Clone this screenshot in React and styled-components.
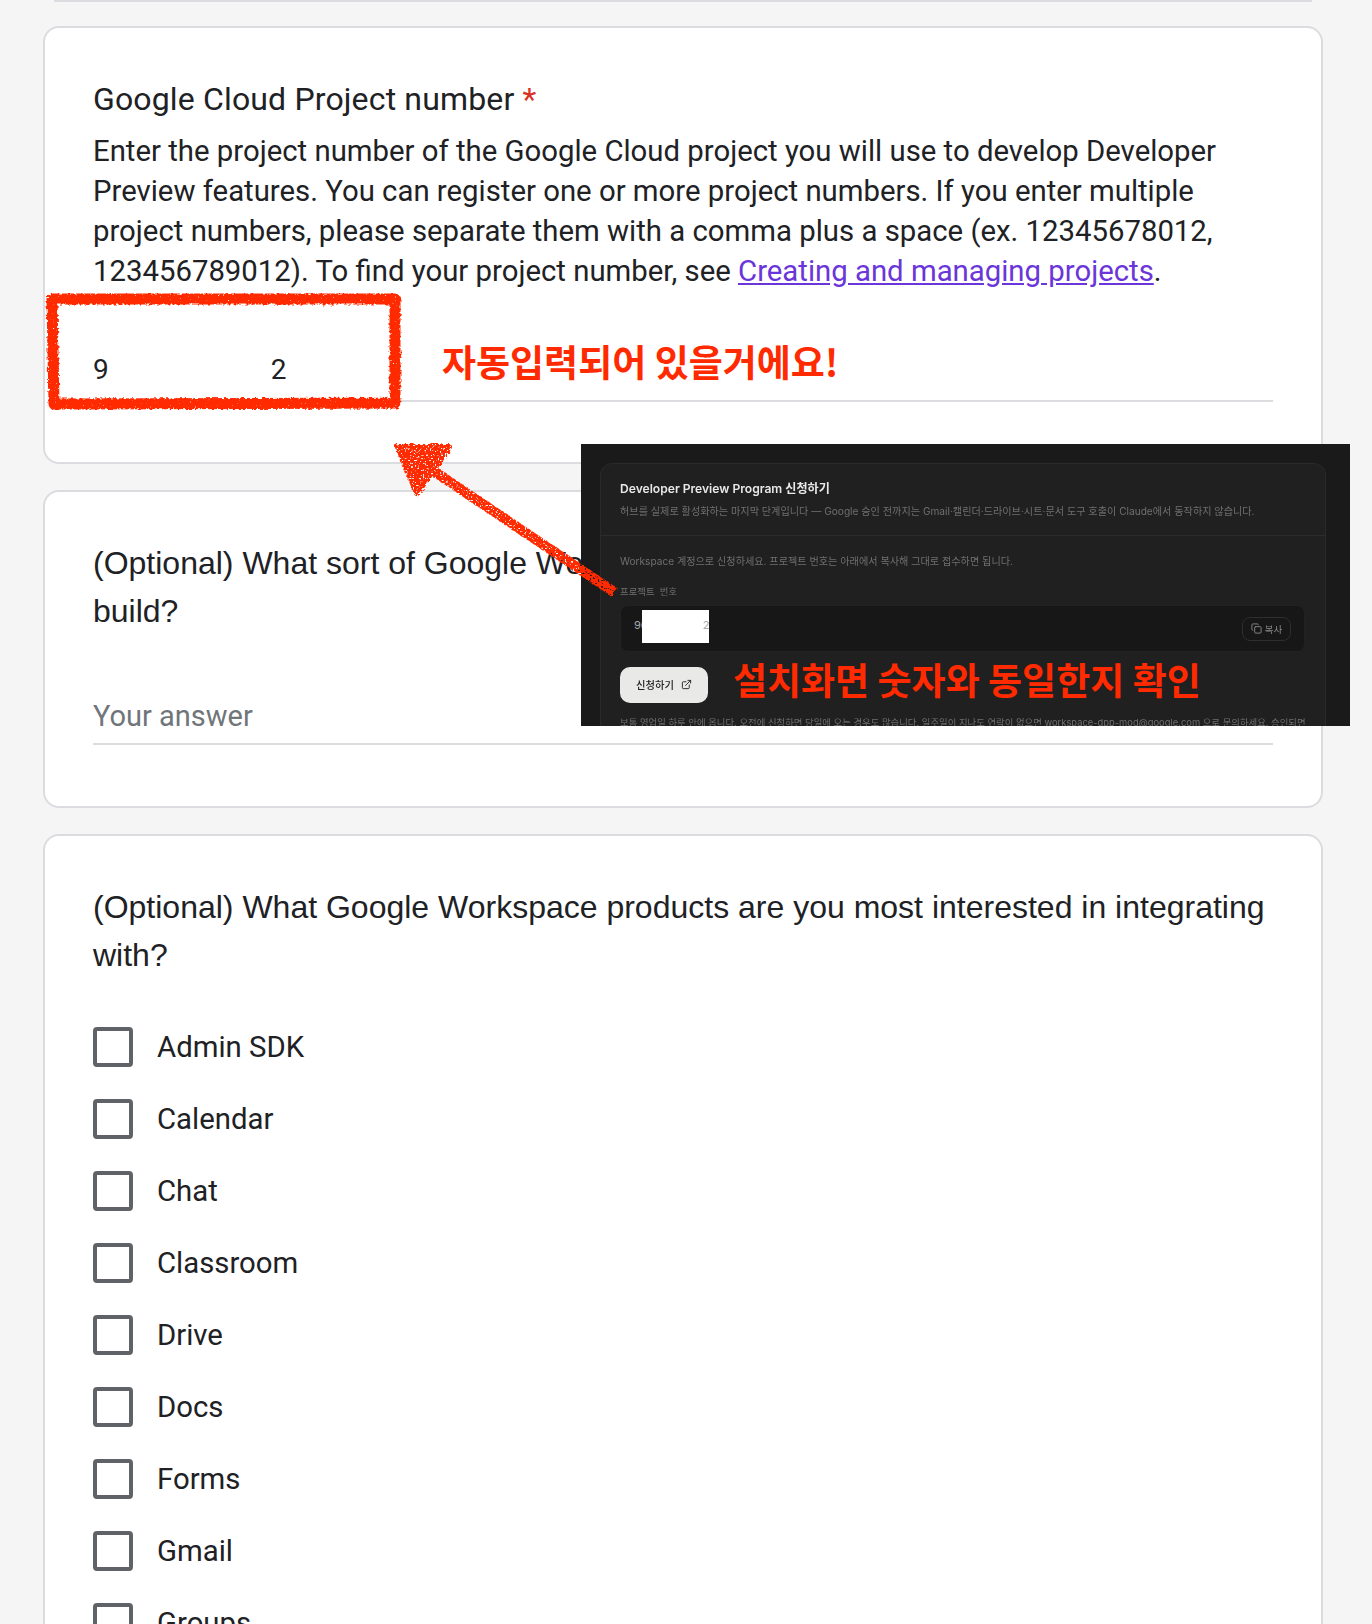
import React from 'react';
import styled, { createGlobalStyle, css } from 'styled-components';

const products = ['Admin SDK', 'Calendar', 'Chat', 'Classroom', 'Drive', 'Docs', 'Forms', 'Gmail', 'Groups'];

export default function App() {
	return (
		<>
			<GlobalStyle />
			<Page>
				<PrevUnderline />
				<Card>
					<Title $roboto>
						Google Cloud Project number <Required>*</Required>
					</Title>
					<Description>
						Enter the project number of the Google Cloud project you will use to develop Developer Preview features.
						You can register one or more project numbers. If you enter multiple project numbers, please separate them
						with a comma plus a space (ex. 12345678012, 123456789012). To find your project number, see{' '}
						<DocLink href="#">Creating and managing projects</DocLink>.
					</Description>
					<InputLine $filled>
						<span>9</span>
						<span>2</span>
					</InputLine>
				</Card>
				<Card>
					<Title>
						(Optional) What sort of Google Workspace integration are you planning to
						<br />
						build?
					</Title>
					<InputLine>Your answer</InputLine>
				</Card>
				<Card>
					<Title>(Optional) What Google Workspace products are you most interested in integrating with?</Title>
					<CheckList>
						{products.map(name => (
							<CheckRow key={name}>
								<CheckBox />
								{name}
							</CheckRow>
						))}
					</CheckList>
				</Card>

				<Panel>
					<PanelCard>
						<PanelHead>
							<PanelTitle>Developer Preview Program 신청하기</PanelTitle>
							<PanelSub>
								허브를 실제로 활성화하는 마지막 단계입니다 — Google 승인 전까지는 Gmail·캘린더·드라이브·시트·문서 도구 호출이 Claude에서 동작하지 않습니다.
							</PanelSub>
						</PanelHead>
						<PanelBody>
							<PanelSub>Workspace 계정으로 신청하세요. 프로젝트 번호는 아래에서 복사해 그대로 접수하면 됩니다.</PanelSub>
							<FieldLabel>프로젝트 &nbsp;번호</FieldLabel>
							<NumberField>
								<NumberText>
									96<Redaction />2
								</NumberText>
								<CopyButton>
									<svg width="11" height="11" viewBox="0 0 24 24" fill="none" stroke="currentColor" strokeWidth="2" strokeLinejoin="round" strokeLinecap="round">
										<rect x="8" y="8" width="14" height="14" rx="2" />
										<path d="M4 16c-1.1 0-2-.9-2-2V4c0-1.1.9-2 2-2h10c1.1 0 2 .9 2 2" />
									</svg>
									복사
								</CopyButton>
							</NumberField>
							<ApplyButton>
								<span>신청하기</span>
								<svg width="11" height="11" viewBox="0 0 24 24" fill="none" stroke="currentColor" strokeWidth="2" strokeLinejoin="round" strokeLinecap="round">
									<path d="M15 3h6v6" />
									<path d="M10 14 21 3" />
									<path d="M18 13v6a2 2 0 0 1-2 2H5a2 2 0 0 1-2-2V8a2 2 0 0 1 2-2h6" />
								</svg>
							</ApplyButton>
							<PanelFoot>
								보통 영업일 하루 안에 옵니다. 오전에 신청하면 당일에 오는 경우도 많습니다. 일주일이 지나도 연락이 없으면 workspace-dpp-mod@google.com 으로 문의하세요. 승인되면
							</PanelFoot>
						</PanelBody>
					</PanelCard>
				</Panel>

				<Scribble viewBox="0 0 1372 1624" width="1372" height="1624">
					<defs>
						<filter id="rough" x="-5%" y="-5%" width="110%" height="110%">
							<feTurbulence type="fractalNoise" baseFrequency="0.35" numOctaves="2" seed="4" result="warp" />
							<feDisplacementMap in="SourceGraphic" in2="warp" scale="5" result="shaken" />
							<feTurbulence type="fractalNoise" baseFrequency="0.6" numOctaves="1" seed="9" />
							<feColorMatrix values="0 0 0 0 0  0 0 0 0 0  0 0 0 0 0  0 0 0 -8 6.6" result="grain" />
							<feComposite in="shaken" in2="grain" operator="in" />
						</filter>
						<filter id="grainy" x="-5%" y="-5%" width="110%" height="110%">
							<feTurbulence type="fractalNoise" baseFrequency="0.35" numOctaves="2" seed="7" result="warp" />
							<feDisplacementMap in="SourceGraphic" in2="warp" scale="5" result="shaken" />
							<feTurbulence type="fractalNoise" baseFrequency="0.6" numOctaves="1" seed="3" />
							<feColorMatrix values="0 0 0 0 0  0 0 0 0 0  0 0 0 0 0  0 0 0 -9 6.3" result="grain" />
							<feComposite in="shaken" in2="grain" operator="in" />
						</filter>
					</defs>
					<path d="M52 299 L395 299 L395 403 L54 404 Z" filter="url(#rough)" fill="none" stroke="#ff2a00" strokeLinejoin="round" strokeWidth="11" />
					<g filter="url(#grainy)" fill="#ff2a00" stroke="#ff2a00" strokeLinejoin="round">
						<polygon points="398,447 449,447 417,493" strokeWidth="6" />
						<path d="M432 470 L614 592" fill="none" strokeWidth="10" />
					</g>
				</Scribble>

				<Note $left={442} $top={335}>자동입력되어 있을거에요!</Note>
				<Note $left={733} $top={653}>설치화면 숫자와 동일한지 확인</Note>
			</Page>
		</>
	);
}

const soft = css`
	filter: blur(0.35px);
`;

const GlobalStyle = createGlobalStyle`
	html, body {
		margin: 0;
		overflow: hidden;
		background: #f5f5f5;
	}
`;

const Page = styled.div`
	position: relative;
	width: 1372px;
	height: 1624px;
	overflow: hidden;
	background: #f5f5f5;
	color: #202124;
	font-family: Roboto, "Noto Sans CJK KR", sans-serif;
`;

const PrevUnderline = styled.div`
	height: 2px;
	margin: 0 60px 24px 54px;
	background: #dadce0;
`;

const Card = styled.section`
	box-sizing: border-box;
	width: 1280px;
	margin: 0 0 26px 43px;
	padding: 47px 48px;
	background: #fff;
	border: 2px solid #dadce0;
	border-radius: 16px;
`;

const Title = styled.h2`
	margin: 0;
	font-family: ${props => (props.$roboto ? 'Roboto' : '"Liberation Sans"')}, sans-serif;
	font-size: 32px;
	font-weight: 400;
	line-height: 48px;
	letter-spacing: ${props => (props.$roboto ? '0.15px' : '0')};
`;

const Required = styled.span`
	color: #d93025;
`;

const Description = styled.p`
	margin: 8px 0 0;
	font-size: 29.33px;
	line-height: 40px;
`;

const DocLink = styled.a`
	color: #6a35d9;
`;

const InputLine = styled.div`
	display: flex;
	gap: 162px;
	height: ${props => (props.$filled ? '50px' : '47px')};
	margin-top: ${props => (props.$filled ? '58px' : '61px')};
	margin-bottom: ${props => (props.$filled ? '13px' : '14px')};
	padding-top: ${props => (props.$filled ? '1px' : '0')};
	border-bottom: 2px solid #dadce0;
	font-size: ${props => (props.$filled ? '28px' : '29px')};
	line-height: 40px;
	color: ${props => (props.$filled ? '#202124' : '#70757a')};
`;

const CheckList = styled.div`
	display: flex;
	flex-direction: column;
	margin-top: 32px;
`;

const CheckRow = styled.label`
	display: flex;
	align-items: center;
	gap: 24px;
	height: 72px;
	font-size: 29.33px;
`;

const CheckBox = styled.span`
	box-sizing: border-box;
	width: 40px;
	height: 40px;
	border: 4px solid #5f6368;
	border-radius: 4px;
`;

const Panel = styled.aside`
	position: absolute;
	left: 581px;
	top: 444px;
	box-sizing: border-box;
	width: 769px;
	height: 282px;
	padding: 19px 24px 0 19px;
	overflow: hidden;
	background: #1a1a1a;
	font-family: Inter, "Noto Sans CJK KR", sans-serif;
`;

const PanelCard = styled.div`
	height: 320px;
	overflow: hidden;
	background: #202020;
	border: 1px solid #2a2a2a;
	border-radius: 12px;
`;

const PanelHead = styled.div`
	height: 72px;
	box-sizing: border-box;
	padding: 16px 19px 0;
	border-bottom: 1px solid #2c2c2c;
`;

const PanelTitle = styled.div`
	${soft}
	font-size: 12.1px;
	font-weight: 600;
	line-height: 18px;
	color: #e8e8e8;
`;

const PanelSub = styled.div`
	${soft}
	margin-top: 4px;
	font-size: 10.15px;
	line-height: 18px;
	color: #6f6f6f;
	white-space: nowrap;
`;

const PanelBody = styled.div`
	padding: 12px 19px 0;
`;

const FieldLabel = styled.div`
	${soft}
	margin-top: 15px;
	font-size: 9.4px;
	line-height: 14px;
	color: #6f6f6f;
`;

const NumberField = styled.div`
	display: flex;
	align-items: center;
	justify-content: space-between;
	box-sizing: border-box;
	width: 685px;
	height: 47px;
	margin-top: 6px;
	padding: 0 13px;
	background: #171717;
	border: 1px solid #222;
	border-radius: 8px;
`;

const NumberText = styled.div`
	display: flex;
	margin-bottom: 5px;
	font-size: 11px;
	color: #a8a8a8;
`;

const Redaction = styled.span`
	width: 67px;
	height: 33px;
	margin: -8px -6px -8px -6px;
	background: #fff;
`;

const CopyButton = styled.div`
	${soft}
	display: flex;
	align-items: center;
	justify-content: center;
	gap: 3px;
	box-sizing: border-box;
	width: 49px;
	height: 24px;
	border: 1px solid #2e2e2e;
	border-radius: 8px;
	font-size: 9.5px;
	color: #8a8a8a;
`;

const ApplyButton = styled.div`
	${soft}
	display: flex;
	align-items: center;
	justify-content: center;
	gap: 7px;
	box-sizing: border-box;
	width: 88px;
	height: 36px;
	margin-top: 15px;
	padding-bottom: 2px;
	background: #e9e9e7;
	border-radius: 10px;
	font-size: 10.3px;
	font-weight: 500;
	color: #222;
`;

const PanelFoot = styled(PanelSub)`
	margin-top: 11px;
	font-size: 9.4px;
`;

const Scribble = styled.svg`
	position: absolute;
	left: 0;
	top: 0;
	pointer-events: none;
`;

const Note = styled.div`
	position: absolute;
	left: ${props => props.$left}px;
	top: ${props => props.$top}px;
	font-family: "Noto Sans CJK KR", sans-serif;
	font-size: 37px;
	font-weight: 700;
	line-height: 52px;
	color: #ff2a00;
	white-space: nowrap;
`;
